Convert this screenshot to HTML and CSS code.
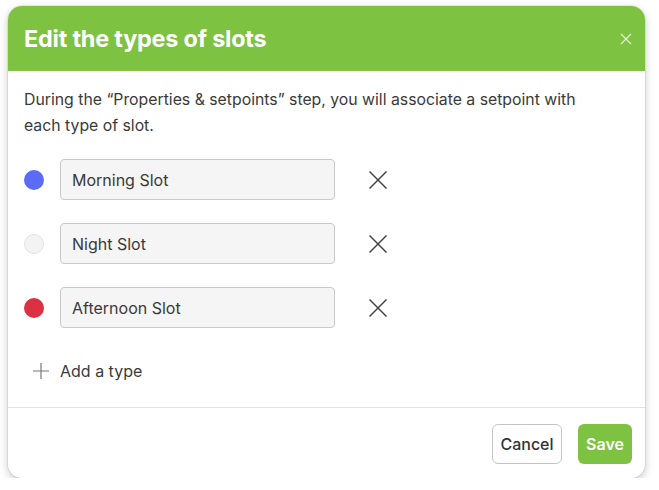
FILE: index.html
```html
<!DOCTYPE html>
<html>
<head>
<meta charset="utf-8">
<link rel="stylesheet" href="styles.css">
</head>
<body>
<div class="page">
  <div class="modal">
    <div class="modal-header">
      <h1 class="title">Edit the types of slots</h1>
      <button class="close" aria-label="Close">
        <svg width="12" height="12" viewBox="0 0 12 12"><path d="M1 1L11 11M11 1L1 11" stroke="#e4f3d4" stroke-width="1.2" fill="none"/></svg>
      </button>
    </div>
    <div class="modal-body">
      <p class="desc">During the “Properties &amp; setpoints” step, you will associate a setpoint with each type of slot.</p>
      <div class="rows">
        <div class="row">
          <span class="dot dot-blue"></span>
          <input class="field" type="text" value="Morning Slot">
          <button class="remove" aria-label="Remove"><svg width="24" height="24" viewBox="0 0 24 24"><path d="M3.5 3.5L20.5 20.5M20.5 3.5L3.5 20.5" stroke="#444" stroke-width="1.5" fill="none"/></svg></button>
        </div>
        <div class="row">
          <span class="dot dot-grey"></span>
          <input class="field" type="text" value="Night Slot">
          <button class="remove" aria-label="Remove"><svg width="24" height="24" viewBox="0 0 24 24"><path d="M3.5 3.5L20.5 20.5M20.5 3.5L3.5 20.5" stroke="#444" stroke-width="1.5" fill="none"/></svg></button>
        </div>
        <div class="row">
          <span class="dot dot-red"></span>
          <input class="field" type="text" value="Afternoon Slot">
          <button class="remove" aria-label="Remove"><svg width="24" height="24" viewBox="0 0 24 24"><path d="M3.5 3.5L20.5 20.5M20.5 3.5L3.5 20.5" stroke="#444" stroke-width="1.5" fill="none"/></svg></button>
        </div>
        <button class="add">
          <svg width="18" height="18" viewBox="0 0 18 18"><path d="M9 1V17M1 9H17" stroke="#777" stroke-width="1.2" fill="none"/></svg>
          <span>Add a type</span>
        </button>
      </div>
    </div>
    <div class="modal-footer">
      <button class="btn btn-cancel">Cancel</button>
      <button class="btn btn-save">Save</button>
    </div>
  </div>
</div>
</body>
</html>
```
FILE: styles.css
```css
* { box-sizing: border-box; }
html, body { margin: 0; padding: 0; background: #fff; }
body { font-family: Inter, "Noto Sans", sans-serif; color: #333; }
.page { padding: 6px 14px 0 8px; }
.modal {
  width: 637px;
  height: 472px;
  border-radius: 14px;
  background: #fff;
  box-shadow: 0 3px 8px rgba(0,0,0,0.22), 0 0 0 1px rgba(0,0,0,0.06);
  overflow: hidden;
  display: flex;
  flex-direction: column;
}
.modal-header {
  height: 65px;
  background: #7dc241;
  display: flex;
  align-items: center;
  justify-content: space-between;
  padding: 0 13px 0 16px;
}
.title {
  margin: 0;
  font-size: 23.4px;
  font-weight: 700;
  color: #fff;
  letter-spacing: -0.2px;
}
.close {
  border: 0; background: none; padding: 0; width: 12px; height: 12px; display: flex;
}
.modal-body {
  padding: 16px 16px 16px 16px;
  border-bottom: 1px solid #e2e2e2;
}
.desc {
  margin: 0 0 20px 0;
  font-size: 15.8px;
  line-height: 26px;
  color: #3a3a3a;
  max-width: 570px;
}
.rows { display: flex; flex-direction: column; gap: 23px; }
.row { display: flex; align-items: center; height: 41px; }
.dot { width: 20px; height: 20px; border-radius: 50%; flex: none; }
.dot-blue { background: #5a6cf6; }
.dot-grey { background: #f3f3f3; border: 1px solid #e2e2e2; }
.dot-red { background: #dc3143; }
.field {
  margin-left: 16px;
  width: 275px;
  height: 41px;
  border: 1px solid #c9c9c9;
  border-radius: 4px;
  background: #f5f5f5;
  padding: 0 11px;
  font-family: Inter, "Noto Sans", sans-serif;
  font-size: 16px;
  color: #3a3a3a;
}
.remove {
  margin-left: 31px;
  border: 0; background: none; padding: 0;
  width: 24px; height: 24px; display: flex;
}
.add {
  height: 40px;
  border: 0; background: none; padding: 0 0 0 8px;
  display: flex; align-items: center; gap: 10px;
  font-family: Inter, "Noto Sans", sans-serif;
  font-size: 16px;
  color: #3a3a3a;
  align-self: flex-start;
}
.modal-footer {
  flex: 1;
  display: flex;
  justify-content: flex-end;
  align-items: flex-start;
  gap: 16px;
  padding: 16px 13px 0 0;
}
.btn {
  height: 40px;
  border-radius: 6px;
  font-family: Inter, "Noto Sans", sans-serif;
  font-size: 16px;
  font-weight: 600;
  padding: 0;
}
.btn-cancel { background: #fff; border: 1px solid #c4c4c4; color: #333; width: 70px; font-weight: 500; }
.btn-save { background: #7dc241; border: 0; color: #fff; width: 54px; }
```
